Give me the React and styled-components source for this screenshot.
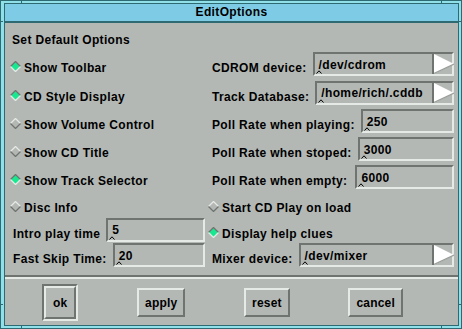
import React from "react";
import styled, { createGlobalStyle } from "styled-components";

const GRAY = "#b4b8b4";
const DARK = "#707470";
const LIGHT = "#e6eae6";
const TEAL = "#2e6a72";

const GlobalStyle = createGlobalStyle`
  html, body { margin: 0; padding: 0; background: ${GRAY}; }
  body {
    font-family: "Liberation Sans", Arial, sans-serif;
    letter-spacing: 0.35px;
  }
`;

const Frame = styled.div`
  box-sizing: border-box;
  width: 462px;
  height: 329px;
  background: #8fe0e8;
  border: 1px solid ${TEAL};
  padding: 2px 2px 2px 3px;
  display: flex;
  position: relative;
`;

// mwm resize handle marks
const Tick = styled.div`
  position: absolute;
  background: ${TEAL};
  width: ${({ $v }) => ($v ? "1px" : "3px")};
  height: ${({ $v }) => ($v ? "3px" : "1px")};
`;

const Window = styled.div`
  flex: 1;
  display: flex;
  flex-direction: column;
  border: 1px solid ${TEAL};
  background: ${GRAY};
`;

const TitleBar = styled.div`
  height: 17px;
  background: #7ecbe6;
  border-bottom: 2px solid ${TEAL};
  font-size: 12px;
  font-weight: bold;
  line-height: 17px;
  text-align: center;
  color: #000;
`;

const Body = styled.div`
  flex: 1;
  display: flex;
  flex-direction: column;
`;

const Content = styled.div`
  padding: 0 4px 0 5px;
`;

const Heading = styled.div`
  height: 31px;
  padding: 3px 0 0 2px;
  box-sizing: border-box;
  display: flex;
  align-items: center;
  font-size: 12px;
  font-weight: bold;
`;

const Grid = styled.div`
  display: grid;
  grid-template-columns: 198px 1fr;
  grid-template-rows: 28px 29px 28px 28px 28px 26px 25px 26px;
`;

const Toggle = styled.div`
  display: flex;
  align-items: center;
  gap: 3px;
  font-size: 12px;
  font-weight: bold;

  svg {
    margin-top: -3px;
    flex: none;
  }
`;

const FieldRow = styled.div`
  display: flex;
  align-items: center;
  padding-left: ${({ $left }) => $left ?? 4}px;
  padding-right: ${({ $right }) => $right || 0}px;
`;

const Label = styled.span`
  font-size: 12px;
  font-weight: bold;
  white-space: nowrap;
`;

const Field = styled.div`
  position: relative;
  flex: 1;
  box-sizing: border-box;
  height: 24px;
  margin: 0 0 8px ${({ $gap }) => $gap ?? 6}px;
  display: flex;
  align-items: center;
  border: 2px solid;
  border-color: ${DARK} ${LIGHT} ${LIGHT} ${DARK};
`;

const FieldText = styled.span`
  flex: 1;
  padding: 1px 0 0 4px;
  font-size: 12px;
  font-weight: bold;
  white-space: nowrap;
`;

const Caret = styled.svg`
  position: absolute;
  left: 1px;
  bottom: 0;
`;

const ArrowBox = styled.div`
  align-self: stretch;
  width: 20px;
  display: flex;
  align-items: stretch;
  border-left: 2px solid ${DARK};
  margin-right: -2px;
`;

const Separator = styled.div`
  margin-top: 3px;
  border-top: 2px solid ${DARK};
  border-bottom: 2px solid ${LIGHT};
`;

const ButtonBar = styled.div`
  flex: 1;
  display: flex;
  align-items: center;
  justify-content: space-between;
  padding: 0 55px 0 37px;
`;

const DefaultRing = styled.div`
  display: flex;
  border: 2px solid;
  border-color: ${DARK} ${LIGHT} ${LIGHT} ${DARK};
`;

const PushButton = styled.button`
  box-sizing: border-box;
  height: ${({ $tall }) => ($tall ? 33 : 29)}px;
  padding: 1px ${({ $tall }) => ($tall ? 7 : 6)}px 0;
  background: ${GRAY};
  border: 2px solid;
  border-color: ${LIGHT} ${DARK} ${DARK} ${LIGHT};
  font-family: "Liberation Sans", Arial, sans-serif;
  font-size: 12px;
  font-weight: bold;
  letter-spacing: 0.2px;
  color: #000;
  cursor: pointer;
`;

const Diamond = ({ on }) => (
  <svg width="11" height="11" viewBox="0 0 11 11">
    <polygon points="5.5,0.5 10.5,5.5 5.5,10.5 0.5,5.5" fill={on ? "#18e890" : GRAY} />
    <polyline points="0.5,5.5 5.5,0.5 10.5,5.5" fill="none" stroke={on ? DARK : LIGHT} strokeWidth="1.3" />
    <polyline points="0.5,5.5 5.5,10.5 10.5,5.5" fill="none" stroke={on ? LIGHT : DARK} strokeWidth="1.3" />
  </svg>
);

const Arrow = () => (
  <svg width="20" height="20" viewBox="0 0 20 20" preserveAspectRatio="none">
    <polygon points="0,0 20,10 0,20" fill="#ffffff" />
    <line x1="0" y1="19.5" x2="20" y2="10" stroke="#9a9e9a" strokeWidth="1.2" />
  </svg>
);

const TextField = ({ value, combo, gap }) => (
  <Field $gap={gap}>
    <FieldText>{value}</FieldText>
    <Caret width="6" height="4" viewBox="0 0 6 4">
      <polyline points="0.5,3.5 3,0.8 5.5,3.5" fill="none" stroke="#000" strokeWidth="1" />
    </Caret>
    {combo && (
      <ArrowBox>
        <Arrow />
      </ArrowBox>
    )}
  </Field>
);

const buttons = ["ok", "apply", "reset", "cancel"];

const ticks = [
  { left: 20, top: -1, v: true },
  { left: 440, top: -1, v: true },
  { left: 20, bottom: -1, v: true },
  { left: 440, bottom: -1, v: true },
  { left: -1, top: 20 },
  { right: -1, top: 20 },
  { left: -1, top: 303 },
  { right: -1, top: 303 },
];

export default function App() {
  return (
    <>
      <GlobalStyle />
      <Frame>
        {ticks.map(({ v, ...pos }, i) => (
          <Tick key={i} $v={v} style={pos} />
        ))}
        <Window>
          <TitleBar>EditOptions</TitleBar>
          <Body>
            <Content>
              <Heading>Set Default Options</Heading>
              <Grid>
                <Toggle><Diamond on />Show Toolbar</Toggle>
                <FieldRow>
                  <Label>CDROM device:</Label>
                  <TextField value="/dev/cdrom" combo />
                </FieldRow>

                <Toggle><Diamond on />CD Style Display</Toggle>
                <FieldRow>
                  <Label>Track Database:</Label>
                  <TextField value="/home/rich/.cddb" combo />
                </FieldRow>

                <Toggle><Diamond />Show Volume Control</Toggle>
                <FieldRow>
                  <Label>Poll Rate when playing:</Label>
                  <TextField value="250" />
                </FieldRow>

                <Toggle><Diamond />Show CD Title</Toggle>
                <FieldRow>
                  <Label>Poll Rate when stoped:</Label>
                  <TextField value="3000" />
                </FieldRow>

                <Toggle><Diamond on />Show Track Selector</Toggle>
                <FieldRow>
                  <Label>Poll Rate when empty:</Label>
                  <TextField value="6000" gap={8} />
                </FieldRow>

                <Toggle><Diamond />Disc Info</Toggle>
                <Toggle><Diamond />Start CD Play on load</Toggle>

                <FieldRow $left={3} $right={3}>
                  <Label>Intro play time</Label>
                  <TextField value="5" />
                </FieldRow>
                <Toggle><Diamond on />Display help clues</Toggle>

                <FieldRow $left={3} $right={3}>
                  <Label>Fast Skip Time:</Label>
                  <TextField value="20" />
                </FieldRow>
                <FieldRow>
                  <Label>Mixer device:</Label>
                  <TextField value="/dev/mixer" combo />
                </FieldRow>
              </Grid>
            </Content>
            <Separator />
            <ButtonBar>
              {buttons.map((b) =>
                b === "ok" ? (
                  <DefaultRing key={b}>
                    <PushButton $tall>{b}</PushButton>
                  </DefaultRing>
                ) : (
                  <PushButton key={b}>{b}</PushButton>
                )
              )}
            </ButtonBar>
          </Body>
        </Window>
      </Frame>
    </>
  );
}
